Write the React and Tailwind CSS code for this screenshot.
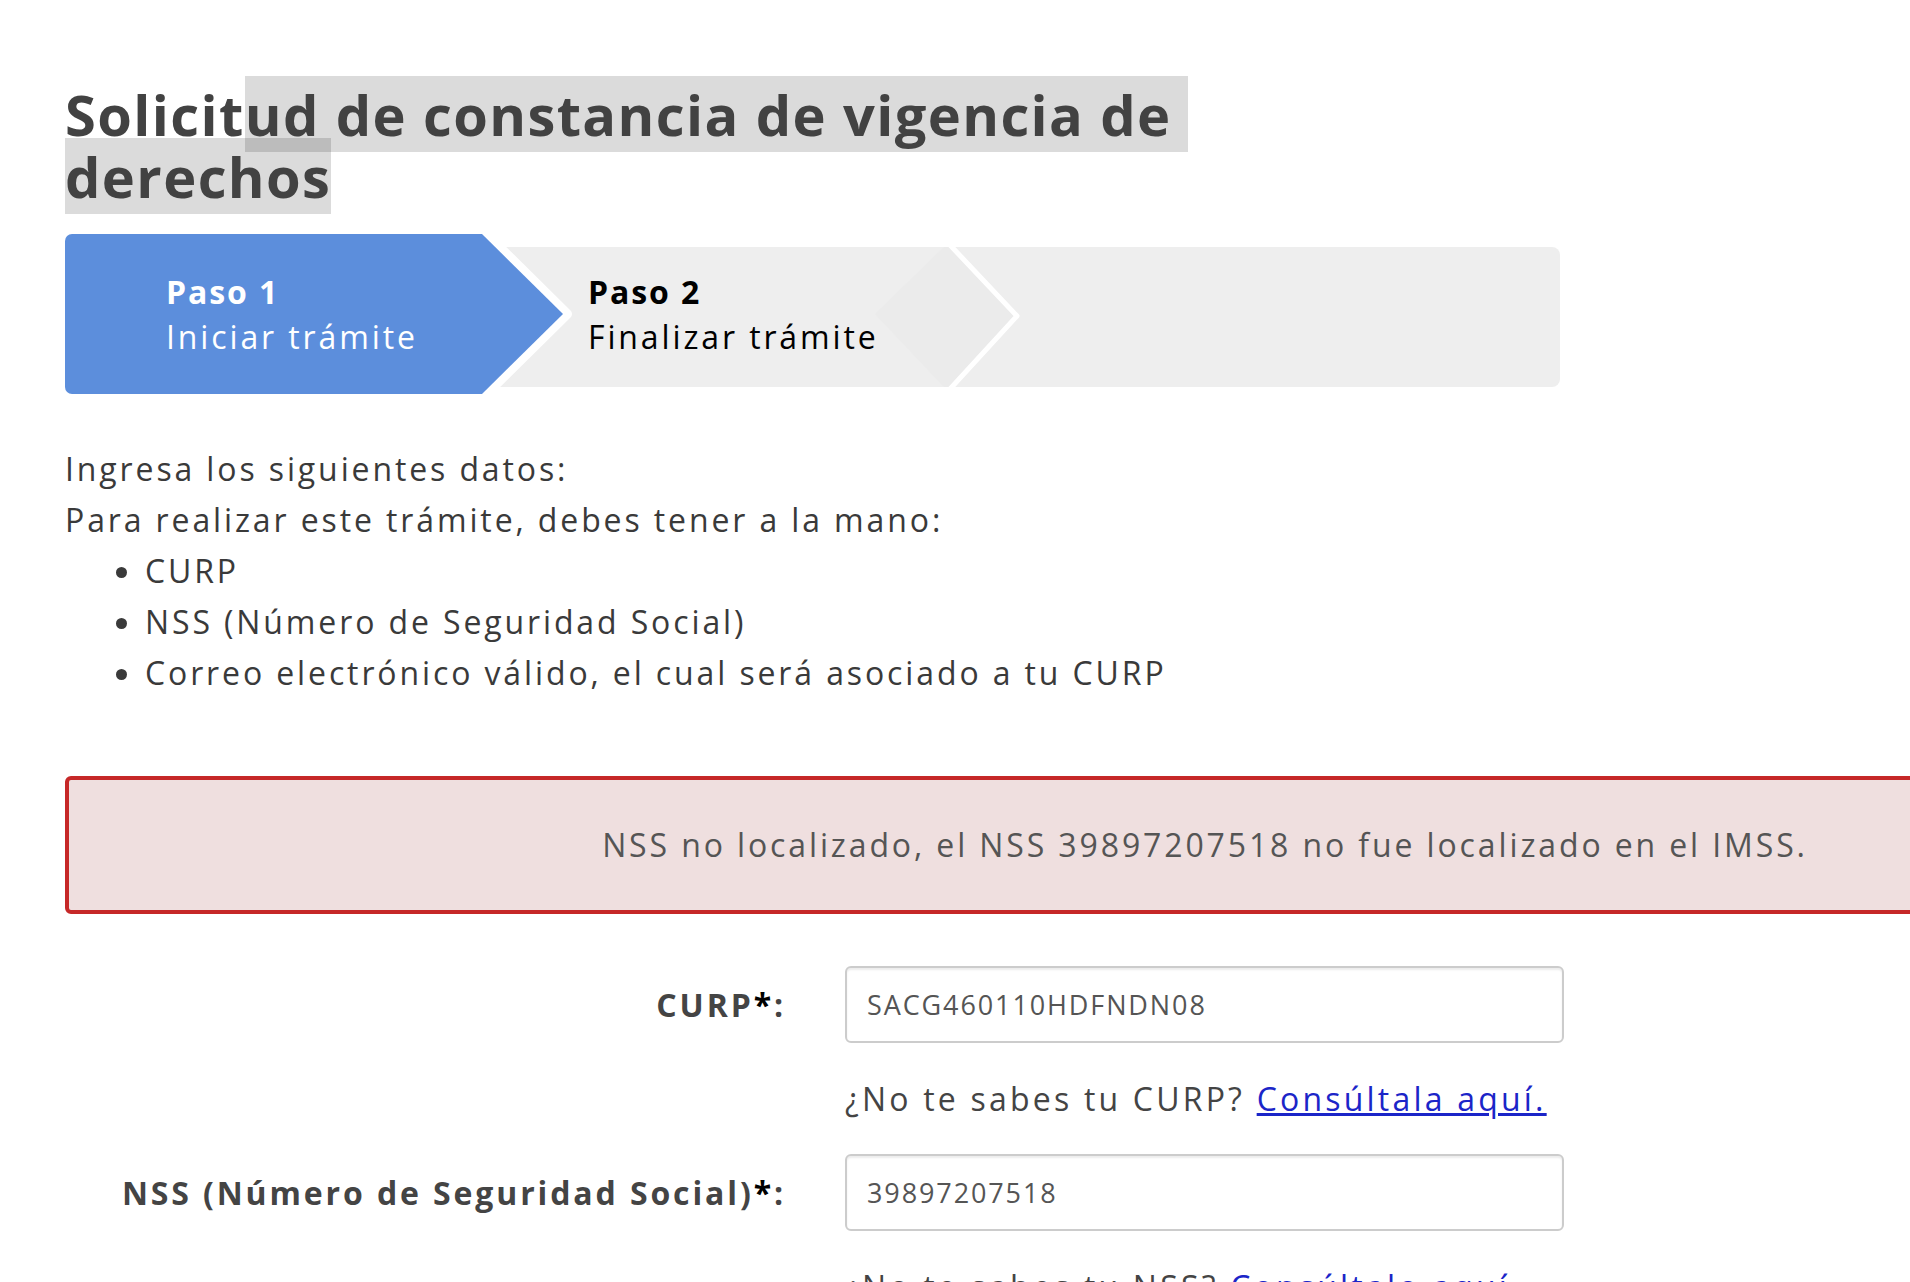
import React from "react";

const Stepper = () => {
  return (
    <div className="mt-[27px] flex h-[160px] w-[1495px] items-start">
      {/* active step */}
      <div className="relative z-10 flex h-[160px] w-[498px] shrink-0 items-center pl-[101px]">
        <svg
          className="absolute left-0 top-0 overflow-visible"
          width="498"
          height="160"
          viewBox="0 0 498 160"
        >
          <path
            d="M417,-4 L502,80 L417,164"
            fill="none"
            stroke="#ffffff"
            strokeWidth="10"
            strokeLinejoin="round"
          />
          <path
            d="M7,0 H417 L498,80 L417,160 H7 A7,7 0 0 1 0,153 V7 A7,7 0 0 1 7,0 Z"
            fill="#5c8edc"
          />
        </svg>
        <div className="relative text-[32px] leading-[45px] tracking-[0.09em] text-white">
          <div className="font-bold tracking-[0.06em]">Paso 1</div>
          <div>Iniciar trámite</div>
        </div>
      </div>

      {/* rest of the bar */}
      <div className="relative -ml-[100px] mt-[13px] h-[140px] flex-1 rounded-r-lg bg-[#eeeeee]">
        <svg
          className="absolute left-0 top-0"
          width="600"
          height="140"
          viewBox="0 0 600 140"
        >
          <polygon
            points="412,67 481,0 487,0 554,67 487,140 481,140"
            fill="#ebebeb"
          />
          <path
            d="M487,-2 L554,69 L487,142"
            fill="none"
            stroke="#ffffff"
            strokeWidth="5"
            strokeLinejoin="round"
          />
        </svg>
        <div className="relative flex h-full items-center pb-[6px] pl-[125px]">
          <div className="text-[32px] leading-[45px] tracking-[0.09em] text-black">
            <div className="font-bold tracking-[0.06em]">Paso 2</div>
            <div>Finalizar trámite</div>
          </div>
        </div>
      </div>
    </div>
  );
};

const Field = ({ label, value, help, link }) => (
  <>
    <div className="grid grid-cols-[721px_719px] items-center gap-x-[59px]">
      <label className="text-right text-[32px] font-bold tracking-[0.09em] text-[#444]">
        {label}
        <span className="text-black">*</span>:
      </label>
      <input
        readOnly
        value={value}
        className="h-[77px] w-full rounded-md border-2 border-[#cccccc] bg-white px-[20px] text-[27px] tracking-[0.07em] text-[#555] shadow-[inset_0_2px_2px_rgba(0,0,0,0.08)] outline-none"
      />
    </div>
    <div className="grid grid-cols-[721px_719px] gap-x-[59px]">
      <div />
      <p className="text-[32px] leading-[45px] tracking-[0.1em] text-[#444]">
        {help}{" "}
        <a href="#" className="text-[#1b25c8] underline">
          {link}
        </a>
      </p>
    </div>
  </>
);

export default function App() {
  return (
    <div className="min-h-screen w-full overflow-hidden bg-white font-['Open_Sans',sans-serif] text-[#404040]">
      <div className="pl-[65px] pt-[83px]">
        <h1 className="text-[56px] font-bold leading-[62px] tracking-[0.025em] text-[#424242]">
          Solicit
          <span className="bg-black/[0.14]">
            ud de constancia de vigencia de{"\u00a0"}
          </span>
          <br />
          <span className="bg-black/[0.14]">derechos</span>
        </h1>

        <Stepper />

        <div className="mt-[49px] text-[32px] leading-[51px] tracking-[0.09em] text-[#3a3a3a]">
          <p>Ingresa los siguientes datos:</p>
          <p>Para realizar este trámite, debes tener a la mano:</p>
          <ul className="list-disc pl-[80px]">
            <li>CURP</li>
            <li>NSS (Número de Seguridad Social)</li>
            <li>Correo electrónico válido, el cual será asociado a tu CURP</li>
          </ul>
        </div>

        <div className="mt-[78px] flex h-[138px] w-[2280px] items-center justify-center rounded-md border-4 border-[#c62828] bg-[#efdfdf] text-[32px] tracking-[0.09em] text-[#555]">
          NSS no localizado, el NSS 39897207518 no fue localizado en el IMSS.
        </div>

        <div className="mt-[52px] flex flex-col gap-y-[33px]">
          <Field
            label="CURP"
            value="SACG460110HDFNDN08"
            help="¿No te sabes tu CURP?"
            link="Consúltala aquí."
          />
          <Field
            label="NSS (Número de Seguridad Social)"
            value="39897207518"
            help="¿No te sabes tu NSS?"
            link="Consúltalo aquí."
          />
        </div>
      </div>
    </div>
  );
}
